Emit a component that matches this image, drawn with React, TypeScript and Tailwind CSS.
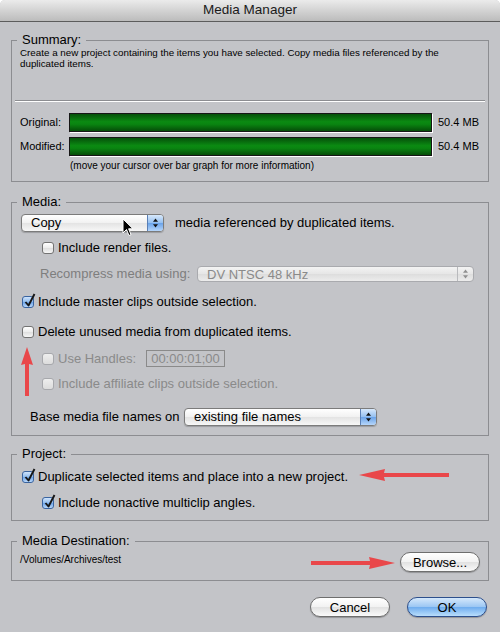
import React from 'react';

const Check: React.FC<{ checked?: boolean; disabled?: boolean; className?: string }> = ({ checked, disabled, className = '' }) => (
  <span
    className={`relative inline-block shrink-0 w-[12px] h-[12px] rounded-[3px] border ${
      checked
        ? 'border-[#3a64a0] bg-[linear-gradient(#cfe3fb,#8fbcef_50%,#6ba3e8_51%,#b9d8fb)]'
        : disabled
        ? 'border-[#a7a8ac] bg-[linear-gradient(#eeeeee,#dcdcdc)]'
        : 'border-[#737373] bg-[linear-gradient(#ffffff,#ececec_50%,#dedede_51%,#f6f6f6)]'
    } ${className}`}
  >
    {checked && (
      <svg className="absolute left-[1px] top-[-4px]" width="12" height="15" viewBox="0 0 12 15">
        <path d="M1.5 9 L4.5 12.5 L10.5 1" stroke="#161616" strokeWidth="1.9" fill="none" strokeLinejoin="round" />
      </svg>
    )}
  </span>
);

const Arrows: React.FC<{ color: string }> = ({ color }) => (
  <svg width="7" height="10" viewBox="0 0 7 10">
    <path d="M3.5 0.5 L6 3.8 L1 3.8 Z" fill={color} />
    <path d="M3.5 9.5 L6 6.2 L1 6.2 Z" fill={color} />
  </svg>
);

const PopUp: React.FC<{ label: string; className: string; disabled?: boolean }> = ({ label, className, disabled }) => (
  <div
    className={`flex items-stretch rounded-[4px] border overflow-hidden ${
      disabled
        ? 'border-[#a9aaae] bg-[linear-gradient(#f3f3f3,#e6e6e6_50%,#dddddd_51%,#ececec)] text-[#8a8a8a]'
        : 'border-[#7b7b7b] bg-[linear-gradient(#ffffff,#f1f1f1_50%,#e3e3e3_51%,#f7f7f7)] text-black shadow-[0_1px_1px_rgba(0,0,0,0.2)]'
    } ${className}`}
  >
    <span className="flex-1 flex items-center pl-[9px] text-[13px] leading-none">{label}</span>
    <span
      className={`w-[16px] flex items-center justify-center border-l ${
        disabled
          ? 'border-[#b9babd]'
          : 'border-[#5a7fb5] bg-[linear-gradient(#d7e8fb,#93bff0_50%,#6aa3e9_51%,#b6d6fa)]'
      }`}
    >
      <Arrows color={disabled ? '#8f8f8f' : '#111'} />
    </span>
  </div>
);

const AquaButton: React.FC<{ label: string; primary?: boolean; className?: string }> = ({ label, primary, className = '' }) => (
  <button
    className={`h-[20px] w-[80px] rounded-full border text-[13px] leading-none flex items-center justify-center shadow-[0_1px_1px_rgba(0,0,0,0.25)] ${
      primary
        ? 'border-[#2d4f8c] bg-[linear-gradient(#d5e8fb,#9ac6f3_50%,#6eacee_51%,#b9defc)]'
        : 'border-[#6e6e6e] bg-[linear-gradient(#ffffff,#f2f2f2_50%,#e1e1e1_51%,#fafafa)]'
    } ${className}`}
  >
    {label}
  </button>
);

const Group: React.FC<{ title: string; className?: string; children: React.ReactNode }> = ({ title, className = '', children }) => (
  <fieldset className={`mx-[11px] border border-[#8c8d91] ${className}`}>
    <legend className="ml-[5px] px-[5px] text-[13px] leading-[16px] text-black">{title}</legend>
    {children}
  </fieldset>
);

const Bar: React.FC = () => (
  <div className="w-[363px] h-[19px] border border-[#161616] bg-[linear-gradient(#05510a,#0b8a12_45%,#0a8511_60%,#054d08)] shadow-[1px_1px_0_#ffffff]" />
);

export default function App() {
  return (
    <div className="relative w-[500px] h-[632px] bg-white font-['Liberation_Sans',Arial,sans-serif] text-black overflow-hidden">
      <div className="h-full flex flex-col bg-[#c3c4c8] rounded-t-[5px]">
        {/* Title bar */}
        <div className="h-[22px] shrink-0 rounded-t-[5px] border-b border-[#5c5c5c] bg-[linear-gradient(#ebebeb,#d3d3d3_50%,#bcbcbc)] flex items-center justify-center">
          <span className="text-[13.5px] text-[#1a1a1a]">Media Manager</span>
        </div>

        {/* Summary */}
        <Group title="Summary:" className="mt-[10px]">
          <div className="h-[53px] pl-[8px] -mt-[1px] text-[9.8px] leading-[11px]">
            Create a new project containing the items you have selected. Copy media files referenced by the
            <br />
            duplicated items.
          </div>
          <div className="mx-[3px] border-t border-[#8c8d91] border-b border-b-white" />
          <div className="mt-[11px] pl-[8px] flex flex-col gap-[5px] text-[11px]">
            <div className="flex items-center">
              <span className="w-[49px]">Original:</span>
              <Bar />
              <span className="ml-[6px]">50.4 MB</span>
            </div>
            <div className="flex items-center">
              <span className="w-[49px]">Modified:</span>
              <Bar />
              <span className="ml-[6px]">50.4 MB</span>
            </div>
          </div>
          <div className="mt-[4px] mb-[10px] pl-[58px] text-[10px] leading-[11px]">
            (move your cursor over bar graph for more information)
          </div>
        </Group>

        {/* Media */}
        <Group title="Media:" className="mt-[12px]">
          <div className="pl-[9px] text-[13px]">
            <div className="h-[25px] flex items-center">
              <PopUp label="Copy" className="w-[143px] h-[18px]" />
              <span className="ml-[11px]">media referenced by duplicated items.</span>
            </div>
            <div className="h-[26px] flex items-center">
              <Check className="ml-[21px]" />
              <span className="ml-[4px]">Include render files.</span>
            </div>
            <div className="h-[26px] flex items-center text-[#7e7e7e]">
              <span className="ml-[19px] w-[157px]">Recompress media using:</span>
              <PopUp label="DV NTSC 48 kHz" className="w-[277px] h-[16px]" disabled />
            </div>
            <div className="h-[30px] flex items-center">
              <Check checked className="ml-[1px]" />
              <span className="ml-[4px]">Include master clips outside selection.</span>
            </div>
            <div className="h-[30px] flex items-center">
              <Check className="ml-[1px]" />
              <span className="ml-[4px]">Delete unused media from duplicated items.</span>
            </div>
            <div className="h-[23px] flex items-center text-[#8a8a8a]">
              <Check disabled className="ml-[21px]" />
              <span className="ml-[4px] w-[88px]">Use Handles:</span>
              <span className="w-[79px] h-[17px] border border-[#8a8a8a] flex items-center justify-center">00:00:01;00</span>
            </div>
            <div className="h-[28px] flex items-center text-[#8a8a8a]">
              <Check disabled className="ml-[21px]" />
              <span className="ml-[4px]">Include affiliate clips outside selection.</span>
            </div>
            <div className="h-[37px] flex items-center">
              <span className="ml-[9px] w-[154px]">Base media file names on</span>
              <PopUp label="existing file names" className="w-[193px] h-[18px]" />
            </div>
          </div>
        </Group>

        {/* Project */}
        <Group title="Project:" className="mt-[10px]">
          <div className="pl-[9px] pb-[5px] text-[13px]">
            <div className="h-[29px] flex items-center">
              <Check checked className="ml-[1px]" />
              <span className="ml-[4px]">Duplicate selected items and place into a new project.</span>
            </div>
            <div className="h-[24px] flex items-center">
              <Check checked className="ml-[21px]" />
              <span className="ml-[4px]">Include nonactive multiclip angles.</span>
            </div>
          </div>
        </Group>

        {/* Media Destination */}
        <Group title="Media Destination:" className="mt-[12px]">
          <div className="flex items-start justify-between pl-[8px] pr-[8px] pb-[8px]">
            <span className="mt-[5px] text-[10px] leading-[12px]">/Volumes/Archives/test</span>
            <AquaButton label="Browse..." className="mt-[3px]" />
          </div>
        </Group>

        <div className="mt-[16px] pr-[13px] flex justify-end gap-[17px]">
          <AquaButton label="Cancel" />
          <AquaButton label="OK" primary />
        </div>
      </div>

      {/* annotation arrows */}
      <svg className="absolute left-[20px] top-[347px]" width="14" height="49" viewBox="0 0 14 49">
        <path d="M7 0 L13 18 L9 17 L9 49 L5 49 L5 17 L1 18 Z" fill="#e9474a" />
      </svg>
      <svg className="absolute left-[359px] top-[468px]" width="90" height="14" viewBox="0 0 90 14">
        <path d="M0 7 L26 1 L25 5 L90 5 L90 9 L25 9 L26 13 Z" fill="#e9474a" />
      </svg>
      <svg className="absolute left-[311px] top-[556px]" width="84" height="14" viewBox="0 0 84 14">
        <path d="M84 7 L58 1 L59 5 L0 5 L0 9 L59 9 L58 13 Z" fill="#e9474a" />
      </svg>

      {/* mouse pointer */}
      <svg className="absolute left-[122px] top-[218px]" width="13" height="19" viewBox="0 0 13 19">
        <path d="M1 1 L1 15 L4.5 11.5 L7 17.5 L9 16.6 L6.6 10.8 L11 10.8 Z" fill="#000" stroke="#fff" strokeWidth="1" strokeLinejoin="round" />
      </svg>
    </div>
  );
}
